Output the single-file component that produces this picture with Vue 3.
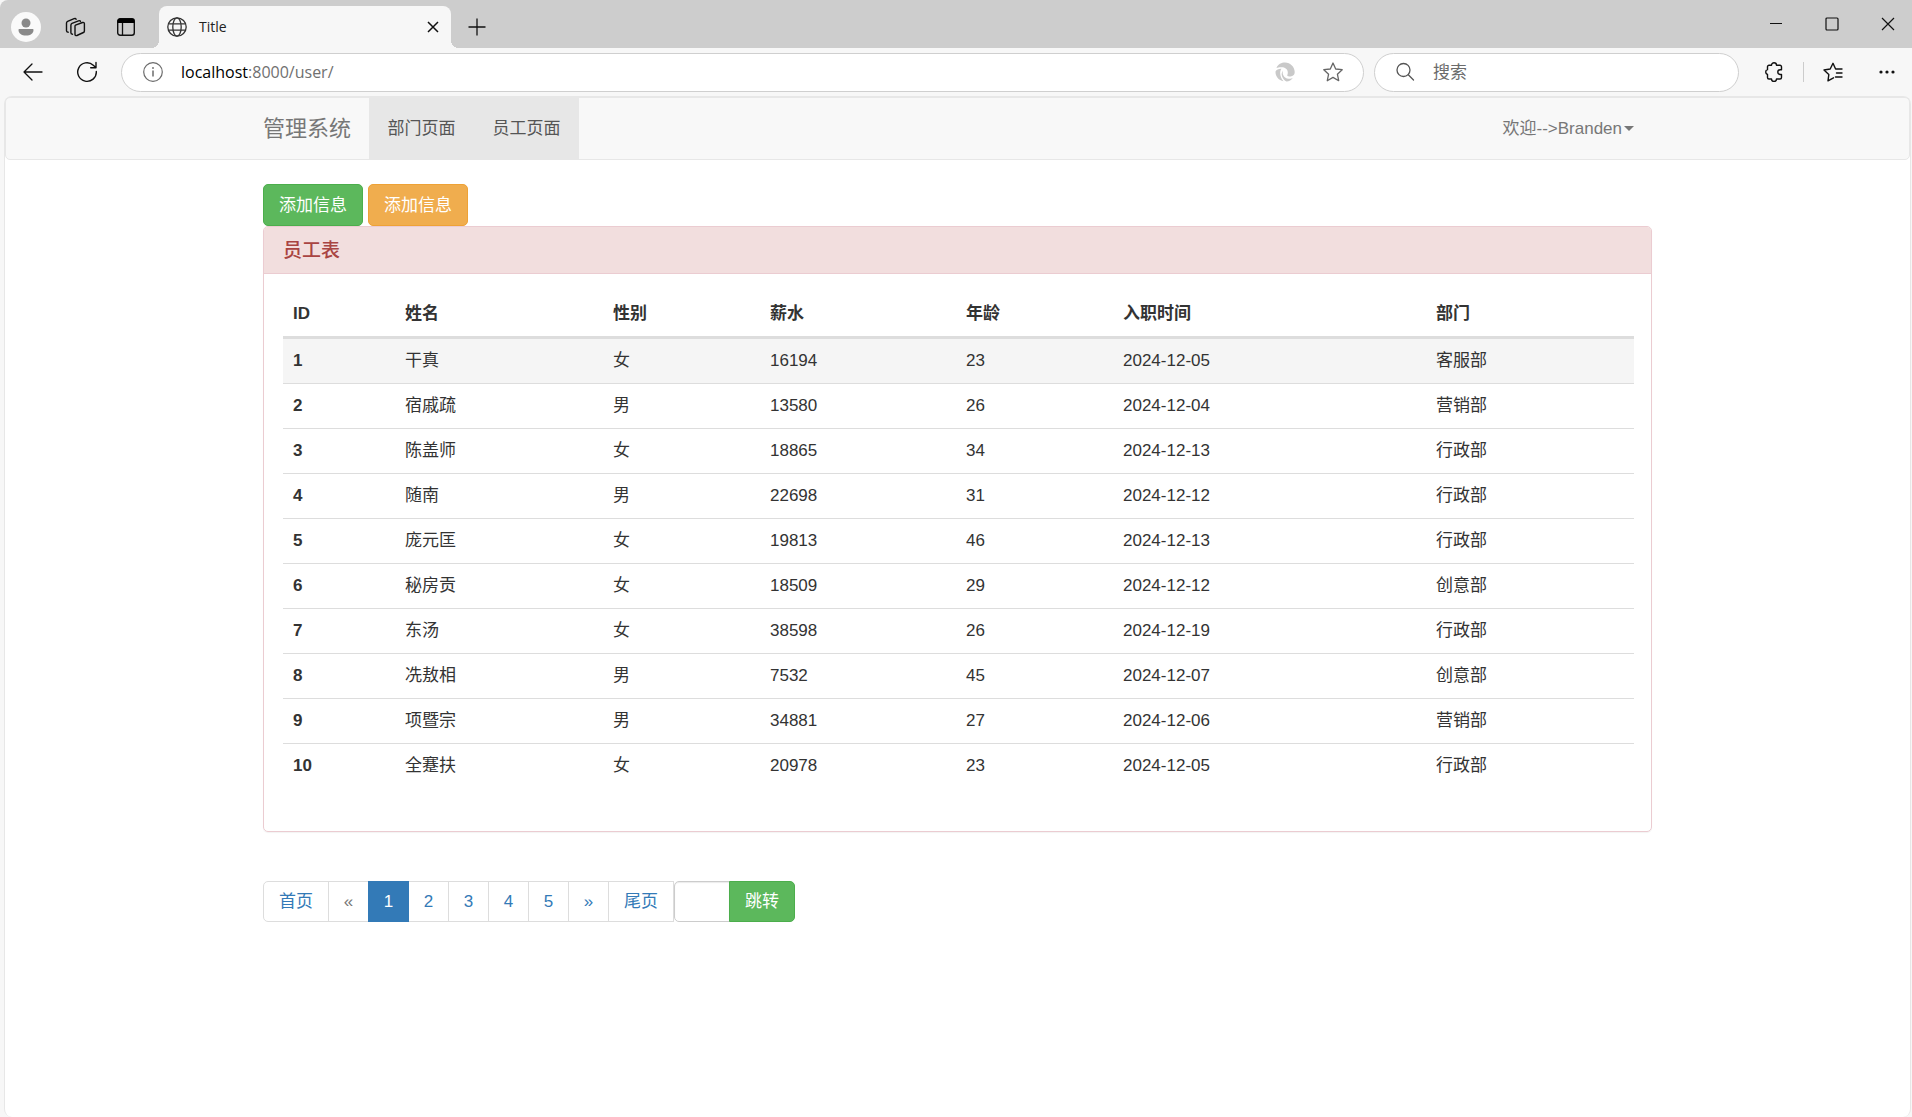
<script setup>
import { ref } from 'vue'

const columns = ['ID', '姓名', '性别', '薪水', '年龄', '入职时间', '部门']

const employees = [
  { id: 1, name: '干真', gender: '女', salary: '16194', age: 23, date: '2024-12-05', dept: '客服部' },
  { id: 2, name: '宿戚疏', gender: '男', salary: '13580', age: 26, date: '2024-12-04', dept: '营销部' },
  { id: 3, name: '陈盖师', gender: '女', salary: '18865', age: 34, date: '2024-12-13', dept: '行政部' },
  { id: 4, name: '随南', gender: '男', salary: '22698', age: 31, date: '2024-12-12', dept: '行政部' },
  { id: 5, name: '庞元匡', gender: '女', salary: '19813', age: 46, date: '2024-12-13', dept: '行政部' },
  { id: 6, name: '秘房贡', gender: '女', salary: '18509', age: 29, date: '2024-12-12', dept: '创意部' },
  { id: 7, name: '东汤', gender: '女', salary: '38598', age: 26, date: '2024-12-19', dept: '行政部' },
  { id: 8, name: '冼敖相', gender: '男', salary: '7532', age: 45, date: '2024-12-07', dept: '创意部' },
  { id: 9, name: '项暨宗', gender: '男', salary: '34881', age: 27, date: '2024-12-06', dept: '营销部' },
  { id: 10, name: '全蹇扶', gender: '女', salary: '20978', age: 23, date: '2024-12-05', dept: '行政部' },
]

const pages = [
  { label: '首页', wide: true },
  { label: '«', muted: true },
  { label: '1', active: true },
  { label: '2' },
  { label: '3' },
  { label: '4' },
  { label: '5' },
  { label: '»' },
  { label: '尾页', wide: true },
]

const jumpTo = ref('')
const query = ref('')
</script>

<template>
  <div class="browser">
    <header class="strip">
      <button class="icon-btn profile" aria-label="Profile">
        <svg width="30" height="30" viewBox="0 0 30 30">
          <circle cx="15" cy="15" r="15" fill="#fafafa" />
          <circle cx="15" cy="11" r="4.5" fill="#8a8a8a" />
          <path d="M8.500 17h13c.6 0 1 .4 1 1 0 3.500-3 5.500-7.500 5.500s-7.500-2-7.500-5.500c0-.6.4-1 1-1z" fill="#8a8a8a" />
        </svg>
      </button>
      <button class="icon-btn spaces" aria-label="Workspaces">
        <svg width="22" height="22" viewBox="0 0 22 22" fill="none" stroke="#111" stroke-width="1.400" stroke-linejoin="round" stroke-linecap="round">
          <path d="M11.500 9.200l7-2.700c1-.3 1.900.2 1.900 1.200v7.200c0 .8-.3 1.300-1 1.600l-6.500 3c-1 .4-1.900-.1-1.900-1.100v-7.500c0-.8-.2-1.300.5-1.700z" />
          <path d="M8.500 18.200c-1 0-1.600-.5-1.600-1.400V9c0-.8.4-1.300 1.100-1.600l6.500-2.600c.9-.3 1.700-.1 2 .6" />
          <path d="M4.200 16.300c-1-.1-1.700-.600-1.700-1.500V7c0-.8.4-1.300 1.100-1.600l6.500-2.700c.9-.3 1.700-.1 2 .6" />
        </svg>
      </button>
      <button class="icon-btn tab-menu" aria-label="Tab actions">
        <svg width="20" height="20" viewBox="0 0 20 20">
          <rect x="1.700" y="1.700" width="16.600" height="16.600" rx="2.500" fill="none" stroke="#111" stroke-width="1.400" />
          <path d="M1.500 6V4a2.500 2.500 0 0 1 2.500-2.500h12A2.500 2.500 0 0 1 18.500 4v2z" fill="#000" />
          <path d="M6.500 6v12" stroke="#111" stroke-width="1.300" />
        </svg>
      </button>
      <div class="tab">
        <svg width="20" height="20" viewBox="0 0 20 20" fill="none" stroke="#333" stroke-width="1.300">
          <circle cx="10" cy="10" r="9.200" />
          <ellipse cx="10" cy="10" rx="4.200" ry="9.200" />
          <path d="M1.500 6.800h17M1.500 13.200h17" />
        </svg>
        <span class="tab-title">Title</span>
        <button class="icon-btn tab-close" aria-label="Close tab">
          <svg width="12" height="12" viewBox="0 0 12 12" stroke="#111" stroke-width="1.500"><path d="M1 1l10 10M11 1L1 11" /></svg>
        </button>
      </div>
      <button class="icon-btn new-tab" aria-label="New tab">
        <svg width="18" height="18" viewBox="0 0 18 18" stroke="#111" stroke-width="1.300"><path d="M9 .5v17M.5 9h17" /></svg>
      </button>
      <div class="window-controls">
        <button class="icon-btn" aria-label="Minimize">
          <svg width="14" height="14" viewBox="0 0 14 14" stroke="#111" stroke-width="1"><path d="M1 6.500h12" /></svg>
        </button>
        <button class="icon-btn" aria-label="Maximize">
          <svg width="14" height="14" viewBox="0 0 14 14" fill="none" stroke="#111" stroke-width="1.200"><rect x="1" y="1" width="12" height="12" rx="1" /></svg>
        </button>
        <button class="icon-btn" aria-label="Close">
          <svg width="14" height="14" viewBox="0 0 14 14" stroke="#111" stroke-width="1.200"><path d="M1 1l12 12M13 1L1 13" /></svg>
        </button>
      </div>
    </header>

    <div class="toolbar">
      <button class="icon-btn back" aria-label="Back">
        <svg width="20" height="18" viewBox="0 0 20 18" fill="none" stroke="#111" stroke-width="1.300" stroke-linecap="round" stroke-linejoin="round"><path d="M19 9H1M9 1L1 9l8 8" /></svg>
      </button>
      <button class="icon-btn reload" aria-label="Reload">
        <svg width="22" height="22" viewBox="0 0 22 22" fill="none" stroke="#111" stroke-width="1.400" stroke-linecap="round" stroke-linejoin="round">
          <path d="M20.300 10.500a9.300 9.300 0 1 1-3-6.300l2.500 2.400M20 1.500v5.300h-5.300" />
        </svg>
      </button>
      <div class="pill address">
        <svg width="20" height="20" viewBox="0 0 20 20" fill="none" stroke="#6b6b6b" stroke-width="1.200">
          <circle cx="10" cy="10" r="9.300" />
          <path d="M10 8.500v6" stroke-width="1.500" />
          <circle cx="10" cy="6" r=".9" fill="#6b6b6b" stroke="none" />
        </svg>
        <div class="url" role="textbox" aria-label="Address"><span class="host">localhost</span>:8000/user/</div>
        <svg width="20" height="20" viewBox="0 0 20 20" fill="#c9c9c9">
          <path d="M1.500 6C3 2 6.500.5 10 .5c5.500 0 9.700 4.500 9.700 9.500 0 3.500-2.700 4.500-5.200 4.500-2 0-2.700-.7-2-2C13.500 10.500 12.500 6 8 5.300 5.500 5 3 5.200 1.500 6z" />
          <path d="M.5 9.500c1-2 3.500-3 6-2.800-2 2.300-2 7.800 2 12.500C4 18.500.2 14.500.5 9.500z" />
          <path d="M8 8.500c-1.200 3.500 1 8 5.500 8.300 2 .1 3.500-.5 4.500-1.100-1.500 2.300-4 3.800-6.500 3.900C7.500 17.500 5 12 8 8.500z" />
        </svg>
        <svg width="20" height="20" viewBox="0 0 20 20" fill="none" stroke="#666" stroke-width="1.300" stroke-linejoin="round">
          <path d="M10 1l2.700 6 6.500.7-4.800 4.500 1.300 6.500L10 15.400l-5.700 3.300 1.300-6.500L.8 7.700l6.500-.7z" />
        </svg>
      </div>
      <label class="pill search">
        <svg width="20" height="20" viewBox="0 0 20 20" fill="none" stroke="#555" stroke-width="1.300" stroke-linecap="round">
          <circle cx="7.500" cy="8" r="6.500" />
          <path d="M12.300 12.800L17.500 18" />
        </svg>
        <input v-model="query" type="text" placeholder="搜索" aria-label="搜索" />
      </label>
      <div class="actions">
        <button class="icon-btn action" aria-label="Extensions">
          <svg width="20" height="20" viewBox="0 0 20 20" fill="none" stroke="#111" stroke-width="1.400" stroke-linejoin="round">
            <path d="M7.500 3.200a2.500 2.500 0 0 1 5 0h3.500a1.500 1.500 0 0 1 1.500 1.500v3h-1.300a2.400 2.400 0 0 0 0 4.800h1.300v3a1.500 1.500 0 0 1-1.500 1.500h-3.500a2.500 2.500 0 0 1-5 0H5a1.500 1.500 0 0 1-1.500-1.500v-3a2.500 2.500 0 0 1 0-4.800v-3A1.500 1.500 0 0 1 5 3.200z" />
          </svg>
        </button>
        <span class="divider"></span>
        <button class="icon-btn action" aria-label="Favorites">
          <svg width="20" height="20" viewBox="0 0 20 20" fill="none" stroke="#111" stroke-width="1.400" stroke-linejoin="round" stroke-linecap="round">
            <path d="M10.500 15.800L5 18.800l.8-6.200L1 8l6.200-1L10 1.300 12.600 7H19M13.500 11H19M12.500 15H19" />
          </svg>
        </button>
        <button class="icon-btn action more" aria-label="Settings and more">
          <svg width="18" height="6" viewBox="0 0 18 6" fill="#111"><circle cx="3" cy="3" r="1.600" /><circle cx="9" cy="3" r="1.600" /><circle cx="15" cy="3" r="1.600" /></svg>
        </button>
      </div>
    </div>

    <div class="page">
      <nav class="navbar">
        <div class="container nav-inner">
          <a class="brand" href="#">管理系统</a>
          <a class="nav-item" href="#">部门页面</a>
          <a class="nav-item" href="#">员工页面</a>
          <a class="welcome" href="#">欢迎--&gt;Branden<span class="caret"></span></a>
        </div>
      </nav>

      <main class="container">
        <div class="buttons">
          <button class="btn green">添加信息</button>
          <button class="btn orange">添加信息</button>
        </div>

        <section class="panel">
          <h3 class="panel-heading">员工表</h3>
          <div class="panel-body">
            <table>
              <colgroup>
                <col class="c-id" />
                <col class="c-name" />
                <col class="c-short" />
                <col class="c-salary" />
                <col class="c-short" />
                <col class="c-date" />
                <col class="c-name" />
              </colgroup>
              <thead>
                <tr>
                  <th v-for="c in columns" :key="c" scope="col">{{ c }}</th>
                </tr>
              </thead>
              <tbody>
                <tr v-for="e in employees" :key="e.id">
                  <th scope="row">{{ e.id }}</th>
                  <td>{{ e.name }}</td>
                  <td>{{ e.gender }}</td>
                  <td>{{ e.salary }}</td>
                  <td>{{ e.age }}</td>
                  <td>{{ e.date }}</td>
                  <td>{{ e.dept }}</td>
                </tr>
              </tbody>
            </table>
          </div>
        </section>

        <div class="pager">
          <ul>
            <li v-for="p in pages" :key="p.label">
              <a href="#" :class="{ wide: p.wide, muted: p.muted, active: p.active }">{{ p.label }}</a>
            </li>
          </ul>
          <form class="jump" @submit.prevent>
            <input v-model="jumpTo" type="text" name="page" aria-label="页码" />
            <button class="btn green" type="submit">跳转</button>
          </form>
        </div>
      </main>
    </div>
  </div>
</template>

<style>
body {
  margin: 0;
  background: #f7f7f7;
}
</style>

<style scoped>
* {
  box-sizing: border-box;
}

.browser {
  display: flex;
  flex-direction: column;
  min-height: 100vh;
  background: #f7f7f7;
  color: #333;
  font-family: "Liberation Sans", "Noto Sans CJK SC", sans-serif;
  font-size: 17px;
  line-height: 24px;
}

svg {
  display: block;
  flex: none;
}

a {
  text-decoration: none;
}

button,
input {
  font: inherit;
}

.icon-btn {
  display: flex;
  align-items: center;
  justify-content: center;
  flex: none;
  padding: 0;
  border: 0;
  background: none;
}

/* Tab strip */
.strip {
  display: flex;
  align-items: stretch;
  height: 48px;
  padding-top: 6px;
  background: #cdcdcd;
  border-top-left-radius: 8px;
}

.profile {
  width: 52px;
}

.spaces {
  width: 46px;
}

.tab-menu {
  width: 56px;
}

.tab {
  position: relative;
  display: flex;
  align-items: center;
  gap: 12px;
  width: 292px;
  height: 42px;
  margin-left: 5px;
  padding: 0 8px;
  background: #f7f7f7;
  border-radius: 8px 8px 0 0;
  color: #222;
  font-family: "Open Sans", sans-serif;
  font-size: 14px;
}

.tab::before,
.tab::after {
  content: "";
  position: absolute;
  bottom: 0;
  width: 8px;
  height: 8px;
}

.tab::before {
  right: 100%;
  background: radial-gradient(circle at 0 0, transparent 8px, #f7f7f7 8px);
}

.tab::after {
  left: 100%;
  background: radial-gradient(circle at 100% 0, transparent 8px, #f7f7f7 8px);
}

.tab-title {
  flex: 1;
}

.tab-close {
  width: 20px;
  height: 20px;
}

.new-tab {
  width: 52px;
}

.window-controls {
  display: flex;
  gap: 8px;
  height: 36px;
  margin-left: auto;
}

.window-controls .icon-btn {
  width: 48px;
}

/* Toolbar */
.toolbar {
  display: flex;
  align-items: center;
  height: 48px;
}

.back {
  width: 66px;
}

.reload {
  width: 42px;
}

.pill {
  display: flex;
  align-items: center;
  height: 39px;
  padding: 0 20px 0 21px;
  background: #fff;
  border: 1px solid #cfcfcf;
  border-radius: 20px;
}

.address {
  flex: 1;
  gap: 28px;
  margin: 0 10px 0 13px;
}

.url {
  flex: 1;
  margin-left: -10px;
  color: #707070;
  font-family: "Open Sans", sans-serif;
  font-size: 16px;
}

.host {
  color: #000;
}

.search {
  width: 365px;
  gap: 17px;
}

.search input {
  flex: 1;
  min-width: 0;
  padding: 2px 0 0;
  border: 0;
  outline: 0;
  background: none;
}

.search input::placeholder {
  color: #6b6b6b;
  opacity: 1;
}

.actions {
  display: flex;
  align-items: center;
  gap: 9px;
  padding: 0 5px 0 15px;
}

.action {
  width: 40px;
  height: 40px;
}

.more {
  margin-left: 5px;
}

.divider {
  width: 1px;
  height: 20px;
  background: #ccc;
}

/* Page */
.page {
  flex: 1;
  margin: 0 1px 0 4px;
  background: #fff;
  border: 1px solid #e7e7e7;
  border-bottom: 0;
  border-radius: 8px;
}

.container {
  max-width: 1389px;
  margin: 0 auto;
}

.navbar {
  margin-bottom: 24px;
  background: #f8f8f8;
  border: 1px solid #e7e7e7;
  border-radius: 5px;
}

.nav-inner {
  display: flex;
  align-items: stretch;
  height: 61px;
  line-height: 61px;
}

.brand {
  width: 106px;
  color: #777;
  font-size: 22px;
}

.nav-item {
  width: 105px;
  background: #e7e7e7;
  color: #555;
  text-align: center;
}

.welcome {
  display: flex;
  align-items: center;
  gap: 2px;
  margin-left: auto;
  padding-right: 18px;
  color: #777;
}

.caret {
  border: 5px solid transparent;
  border-top-color: #777;
  border-bottom: 0;
}

.buttons {
  display: flex;
  gap: 5px;
}

.btn {
  height: 42px;
  padding: 1px 15px 0;
  border: 1px solid;
  border-radius: 5px;
  color: #fff;
}

.green {
  background: #5cb85c;
  border-color: #4cae4c;
}

.orange {
  background: #f0ad4e;
  border-color: #eea236;
}

.panel {
  margin-bottom: 49px;
  border: 1px solid #ebccd1;
  border-radius: 5px;
  box-shadow: 0 1px 1px rgba(0, 0, 0, 0.05);
}

.panel-heading {
  margin: 0;
  padding: 12px 19px 11px;
  background: #f2dede;
  border-bottom: 1px solid #ebccd1;
  border-radius: 4px 4px 0 0;
  color: #a94442;
  font-size: 19px;
  font-weight: 500;
  line-height: 23px;
}

.panel-body {
  padding: 18px 19px;
}

table {
  width: 100%;
  margin-bottom: 25px;
  table-layout: fixed;
  border-collapse: separate;
  border-spacing: 0;
}

.c-id {
  width: 112px;
}

.c-name {
  width: 208px;
}

.c-short {
  width: 157px;
}

.c-salary {
  width: 196px;
}

.c-date {
  width: 313px;
}

th,
td {
  padding: 10px;
  text-align: left;
  border-top: 1px solid #ddd;
}

th {
  font-weight: 700;
}

thead th {
  border-top: 0;
  border-bottom: 3px solid #ddd;
}

tbody tr:first-child > * {
  border-top: 0;
  background: #f5f5f5;
}

.pager {
  display: flex;
}

.pager ul {
  display: flex;
  margin: 0;
  padding: 0;
  list-style: none;
}

.pager li + li {
  margin-left: -1px;
}

.pager a {
  display: block;
  width: 41px;
  background: #fff;
  border: 1px solid #ddd;
  color: #337ab7;
  line-height: 39px;
  text-align: center;
}

.pager .wide {
  width: 66px;
}

.pager li:first-child a {
  border-radius: 5px 0 0 5px;
}

.pager .muted {
  color: #777;
}

.pager .active {
  position: relative;
  background: #337ab7;
  border-color: #337ab7;
  color: #fff;
}

.jump {
  display: flex;
}

.jump input {
  width: 56px;
  height: 41px;
  padding: 0 14px;
  border: 1px solid #ccc;
  border-radius: 5px 0 0 5px;
  outline: 0;
  box-shadow: inset 0 1px 1px rgba(0, 0, 0, 0.08);
}

.jump .btn {
  height: 41px;
  margin-left: -1px;
  border-radius: 0 5px 5px 0;
}
</style>
